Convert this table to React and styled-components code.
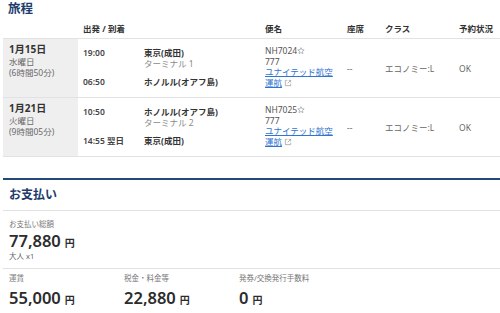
import React from 'react'
import styled, { createGlobalStyle } from 'styled-components'

const GlobalStyle = createGlobalStyle`
  body {
    margin: 0;
    background: #ffffff;
    font-family: "Noto Sans", "Noto Sans CJK JP", sans-serif;
    color: #333333;
  }
`

const Page = styled.div`
  width: 500px;
  height: 313px;
  overflow: hidden;
  padding-left: 3px;
  box-sizing: border-box;
`

const SectionTitle = styled.h2`
  margin: 0;
  padding-left: 5px;
  font-size: 12.5px;
  line-height: 18px;
  font-weight: 700;
  color: #1d3c6c;
`

const cols = '75px 61px 121px 82px 38px 74px 1fr'

const HeadRow = styled.div`
  display: grid;
  grid-template-columns: ${cols};
  height: 20px;
  align-items: center;
  border-bottom: 1px solid #e2e2e2;
  font-size: 8.5px;
  font-weight: 700;
`

const HeadCell = styled.div`
  padding-left: 5px;
  grid-column: ${p => p.$span || 'auto'};
`

const Row = styled.div`
  display: grid;
  grid-template-columns: ${cols};
  height: 58px;
  border-bottom: 1px solid #e2e2e2;
  font-size: 8.5px;
`

const DateCell = styled.div`
  background: #efefef;
  padding: 4px 6px 0;
  display: flex;
  flex-direction: column;
  color: #6a6a6a;
  line-height: 11px;
`

const DateMain = styled.span`
  font-size: 10px;
  line-height: 13px;
  font-weight: 700;
  color: #333333;
`

const Legs = styled.div`
  grid-column: span 2;
  display: flex;
  flex-direction: column;
  gap: 7px;
  padding-top: 8px;
`

const Leg = styled.div`
  display: grid;
  grid-template-columns: 61px 121px;
  line-height: 11px;
`

const Time = styled.div`
  padding-left: 5px;
  font-weight: 600;
  color: #444444;
`

const Place = styled.div`
  padding-left: 5px;
  display: flex;
  flex-direction: column;
  font-weight: 700;
`

const Terminal = styled.span`
  font-weight: 400;
  color: #8a8a8a;
`

const FlightCell = styled.div`
  padding: 7px 0 0 5px;
  display: flex;
  flex-direction: column;
  line-height: 10.7px;
  color: #555555;
`

const Link = styled.a`
  color: #2f74d0;
  text-decoration: underline;
`

const Icon = styled.svg`
  width: 8px;
  height: 8px;
  margin-left: ${p => p.$gap || 0}px;
  vertical-align: -0.5px;
`

const Center = styled.div`
  padding-left: 5px;
  display: flex;
  align-items: center;
  color: #666666;
`

const PayBlock = styled.div`
  margin-top: 21px;
  border-top: 2px solid #244878;
`

const PayTitle = styled(SectionTitle)`
  padding: 6px 0 6px 6px;
  font-size: 12px;
  border-bottom: 1px solid #e2e2e2;
`

const Summary = styled.div`
  padding: 8px 6px 7px;
  border-bottom: 1px solid #e2e2e2;
  display: flex;
  flex-direction: column;
`

const Label = styled.span`
  font-size: 7.5px;
  line-height: 10px;
  color: #777777;
`

const Amount = styled.div`
  font-size: 16.5px;
  line-height: 18px;
  font-weight: 600;
  color: #2c2c2c;
  margin-top: ${p => p.$gap}px;
`

const Yen = styled.span`
  font-size: 10px;
  font-weight: 700;
  margin-left: 4px;
`

const Sub = styled.span`
  font-size: 7.5px;
  line-height: 9px;
  color: #666666;
`

const Breakdown = styled.div`
  display: grid;
  grid-template-columns: 115px 115px 1fr;
  padding: 4px 6px 0;
`

const Item = styled.div`
  display: flex;
  flex-direction: column;
`

const Star = () => (
  <Icon viewBox="0 0 12 12">
    <path d="M6 1l1.4 3.1 3.4.3-2.6 2.2.8 3.3L6 8.2 3 9.9l.8-3.3L1.2 4.4l3.4-.3z" fill="none" stroke="#999" strokeWidth="1" strokeLinejoin="round" />
  </Icon>
)

const External = () => (
  <Icon viewBox="0 0 12 12" $gap={2}>
    <path d="M5 2H2v8h8V7M7 2h3v3M10 2L5.5 6.5" fill="none" stroke="#999" strokeWidth="1.1" />
  </Icon>
)

const trips = [
  {
    date: '1月15日', day: '水曜日', dur: '(6時間50分)',
    dep: { time: '19:00', place: '東京(成田)', term: 'ターミナル 1' },
    arr: { time: '06:50', place: 'ホノルル(オアフ島)' },
    flight: 'NH7024',
  },
  {
    date: '1月21日', day: '火曜日', dur: '(9時間05分)',
    dep: { time: '10:50', place: 'ホノルル(オアフ島)', term: 'ターミナル 2' },
    arr: { time: '14:55 翌日', place: '東京(成田)' },
    flight: 'NH7025',
  },
]

const fees = [
  { label: '運賃', value: '55,000' },
  { label: '税金・料金等', value: '22,880' },
  { label: '発券/交換発行手数料', value: '0' },
]

export default function App() {
  return (
    <Page>
      <GlobalStyle />
      <SectionTitle>旅程</SectionTitle>
      <HeadRow>
        <div />
        <HeadCell $span="span 2">出発 / 到着</HeadCell>
        <HeadCell>便名</HeadCell>
        <HeadCell>座席</HeadCell>
        <HeadCell>クラス</HeadCell>
        <HeadCell>予約状況</HeadCell>
      </HeadRow>
      {trips.map(t => (
        <Row key={t.flight}>
          <DateCell>
            <DateMain>{t.date}</DateMain>
            <span>{t.day}</span>
            <span>{t.dur}</span>
          </DateCell>
          <Legs>
            <Leg>
              <Time>{t.dep.time}</Time>
              <Place>
                {t.dep.place}
                <Terminal>{t.dep.term}</Terminal>
              </Place>
            </Leg>
            <Leg>
              <Time>{t.arr.time}</Time>
              <Place>{t.arr.place}</Place>
            </Leg>
          </Legs>
          <FlightCell>
            <span>{t.flight}<Star /></span>
            <span>777</span>
            <span><Link>ユナイテッド航空</Link></span>
            <span><Link>運航</Link><External /></span>
          </FlightCell>
          <Center>--</Center>
          <Center>エコノミー:L</Center>
          <Center>OK</Center>
        </Row>
      ))}
      <PayBlock>
        <PayTitle>お支払い</PayTitle>
        <Summary>
          <Label>お支払い総額</Label>
          <Amount $gap={3}>77,880<Yen>円</Yen></Amount>
          <Sub>大人 x1</Sub>
        </Summary>
        <Breakdown>
          {fees.map(f => (
            <Item key={f.label}>
              <Label>{f.label}</Label>
              <Amount $gap={6}>{f.value}<Yen>円</Yen></Amount>
            </Item>
          ))}
        </Breakdown>
      </PayBlock>
    </Page>
  )
}
